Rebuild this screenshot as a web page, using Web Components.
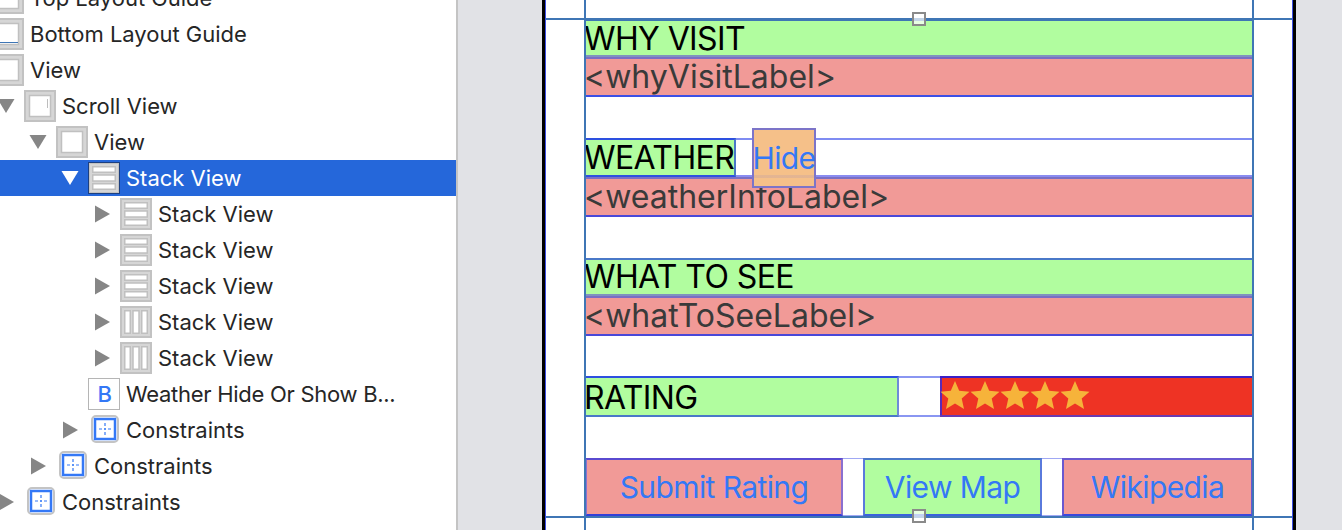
<!DOCTYPE html>
<html lang="en">
<head>
<meta charset="utf-8">
<title>Storyboard</title>
<style>
    html, body { margin: 0; height: 100%; overflow: hidden; background: #e1e2e6; }
    body { font-family: 'Inter', 'Liberation Sans', sans-serif; }
</style>
</head>
<body>

<ib-window>
    <ib-outline slot="outline">
        <ib-row level="-1" icon="guide-top">Top Layout Guide</ib-row>
        <ib-row level="-1" icon="guide-bottom">Bottom Layout Guide</ib-row>
        <ib-row level="-1" icon="view">View</ib-row>
        <ib-row level="0" icon="scroll" arrow="open">Scroll View</ib-row>
        <ib-row level="1" icon="view" arrow="open">View</ib-row>
        <ib-row level="2" icon="hstack" arrow="open" selected>Stack View</ib-row>
        <ib-row level="3" icon="hstack" arrow="closed">Stack View</ib-row>
        <ib-row level="3" icon="hstack" arrow="closed">Stack View</ib-row>
        <ib-row level="3" icon="hstack" arrow="closed">Stack View</ib-row>
        <ib-row level="3" icon="vstack" arrow="closed">Stack View</ib-row>
        <ib-row level="3" icon="vstack" arrow="closed">Stack View</ib-row>
        <ib-row level="2" icon="button" style="letter-spacing:-.28px">Weather Hide Or Show B...</ib-row>
        <ib-row level="2" icon="constraints" arrow="closed">Constraints</ib-row>
        <ib-row level="1" icon="constraints" arrow="closed">Constraints</ib-row>
        <ib-row level="0" icon="constraints" arrow="closed">Constraints</ib-row>
    </ib-outline>

    <ib-device slot="canvas">
        <ib-group>
            <ib-box kind="green" line="#7f93bf" top="#3f76b5" style="padding-top:2px">WHY VISIT</ib-box>
            <ib-box kind="pink" line="#3c4fe6" top="#7a6fc4">&lt;whyVisitLabel&gt;</ib-box>
        </ib-group>
        <ib-group>
            <weather-row>
                <ib-box kind="green" side="#4a78c8" line="#2d50e0" top="#2d50e0" style="width:151px;margin:-2px 0;padding-top:2px">WEATHER</ib-box>
                <ib-overlay-button slot="button">Hide</ib-overlay-button>
            </weather-row>
            <ib-box kind="pink" line="#4a48d8" top="#7a6fc4">&lt;weatherInfoLabel&gt;</ib-box>
        </ib-group>
        <ib-group>
            <ib-box kind="green" line="#7f93bf" top="#4a78c8">WHAT TO SEE</ib-box>
            <ib-box kind="pink" line="#4a48d8" top="#7a6fc4">&lt;whatToSeeLabel&gt;</ib-box>
        </ib-group>
        <rating-row>
            <ib-box kind="green" side="#6f8ad8" line="#4a78c8" top="#2d50e0" style="padding-top:3px">RATING</ib-box>
            <star-box slot="stars"></star-box>
        </rating-row>
        <button-row>
            <ib-box kind="pink" action side="#8a70d0" line="#3240d8" top="#5a4ad0" style="width:258px">Submit Rating</ib-box>
            <ib-box kind="green" action side="#5a7adc" line="#3a62dc" top="#4a78c8" style="width:179px">View Map</ib-box>
            <ib-box kind="pink" action side="#6a58d0" line="#3a48dc" top="#6a58d0" style="width:191px">Wikipedia</ib-box>
        </button-row>
    </ib-device>
</ib-window>

<script>
// outer split: outline on the left, storyboard canvas on the right
class IbWindow extends HTMLElement {
    constructor() {
        super();
        this.attachShadow({ mode: 'open' }).innerHTML = `
        <style>
            :host { display: flex; width: 1342px; height: 530px; overflow: hidden; }
            .outline { flex: 0 0 456px; background: #fff; border-right: 2px solid #c4c4c4; overflow: hidden; }
            .canvas { flex: 1; background: #e1e2e6; padding-left: 84px; overflow: hidden; }
        </style>
        <div class="outline"><slot name="outline"></slot></div>
        <div class="canvas"><slot name="canvas"></slot></div>
        `;
    }
}

class IbOutline extends HTMLElement {
    constructor() {
        super();
        this.attachShadow({ mode: 'open' }).innerHTML = `
        <style>
            :host { display: block; margin-top: -20px; }
        </style>
        <slot></slot>
        `;
    }
}

const TILE = '<rect x="1" y="1" width="30" height="30" fill="#d6d6d6" stroke="#c2c2c2" stroke-width="2"/>';
const PANE = '<rect x="5.500" y="5.500" width="21" height="21" fill="#fff" stroke="#c0c0c0" stroke-width="1.500"/>';
const ICONS = {
    'guide-top': `${TILE}${PANE}<path d="M6 8h20" stroke="#3f76b5"/>`,
    'guide-bottom': `${TILE}${PANE}<path d="M6 24.500h20" stroke="#3f76b5"/>`,
    'view': `${TILE}${PANE}`,
    'scroll': `${TILE}${PANE}<path d="M23.500 9v9" stroke="#bdbdbd"/>`,
    'hstack': `${TILE}<g fill="#fff" stroke="#c0c0c0" stroke-width="1.500"><rect x="4.750" y="4.750" width="22.500" height="5.500"/><rect x="4.750" y="13" width="22.500" height="6"/><rect x="4.750" y="21.750" width="22.500" height="5.500"/></g>`,
    'vstack': `${TILE}<g fill="#fff" stroke="#c0c0c0" stroke-width="1.500"><rect x="4.750" y="4.750" width="5.500" height="22.500"/><rect x="13" y="4.750" width="6" height="22.500"/><rect x="21.750" y="4.750" width="5.500" height="22.500"/></g>`,
    'button': `<rect x=".5" y=".5" width="31" height="31" fill="#fff" stroke="#b5b5b5"/><text x="16.500" y="24" text-anchor="middle" font-family="Inter" font-size="22" font-weight="500" fill="#3478f6">B</text>`,
    'constraints': `<rect x="4" y="2" width="26" height="26" rx="4" fill="#fff" stroke="#c4c4c4" stroke-width="2"/><rect x="7" y="5" width="20" height="20" fill="#fff" stroke="#3478f6" stroke-width="2.500"/><path d="M17 9v3M17 14v2M17 18v3M11 15h3M16 15h2M20 15h3" stroke="#3478f6" stroke-width="1.200"/>`
};

class IbRow extends HTMLElement {
    constructor() {
        super();
        this.attachShadow({ mode: 'open' });
    }

    connectedCallback() {
        let level = parseInt(this.getAttribute('level'));
        let arrow = this.getAttribute('arrow');
        let arrowShape = '';
        if (arrow == 'open') arrowShape = '<path d="M5.500 6h17l-8.500 14z"/>';
        if (arrow == 'closed') arrowShape = '<path d="M7 4.500l15 8.500-15 8.500z"/>';
        let icon = ICONS[this.getAttribute('icon')];

        this.shadowRoot.innerHTML = `
        <style>
            :host { display: flex; align-items: center; height: 36px; color: #262626; font-size: 22px; white-space: nowrap; }
            :host([selected]) { background: #2567da; color: #fff; }
            .inner { display: flex; align-items: center; margin-left: ${level * 32 - 8}px; }
            .arrow { width: 32px; height: 26px; flex: none; fill: #868686; }
            :host([selected]) .arrow { fill: #fff; }
            .icon { width: 32px; height: 32px; flex: none; }
            :host([selected]) .icon { outline: 1px solid #1c3f80; outline-offset: -1px; }
            .text { margin-left: 6px; }
        </style>
        <div class="inner">
            <svg class="arrow" viewBox="0 0 32 26">${arrowShape}</svg>
            <svg class="icon" viewBox="0 0 32 32">${icon}</svg>
            <span class="text"><slot></slot></span>
        </div>
        `;
    }
}

// device frame, its guides and the two resize handles
class IbDevice extends HTMLElement {
    constructor() {
        super();
        this.attachShadow({ mode: 'open' }).innerHTML = `
        <style>
            :host { display: block; position: relative; box-sizing: border-box; width: 754px; height: 530px; background: #fff;
                border-left: 3px solid #000; border-right: 3px solid #000; overflow: hidden; }
            .frame { display: flex; flex-direction: column; gap: 41.5px; box-sizing: border-box; height: 100%;
                border-left: 1px solid #3c4fe6; border-right: 1px solid #3c4fe6; padding: 19px 39px 0 39px; }
            .guide { position: absolute; background: #3f76b5; }
            .v { top: 0; bottom: 0; width: 2px; }
            .h { left: 1px; right: 1px; height: 2px; }
            .handle { position: absolute; box-sizing: border-box; width: 14px; height: 14px; left: 367px;
                border: 2px solid #8a8a8a; background: rgba(255,255,255,.7); }
        </style>
        <div class="frame"><slot></slot></div>
        <div class="guide v" style="left:39px"></div>
        <div class="guide v" style="left:707px"></div>
        <div class="guide h" style="top:18px"></div>
        <div class="guide h" style="top:516px"></div>
        <div class="handle" style="top:12px"></div>
        <div class="handle" style="top:509px"></div>
        `;
    }
}

class IbGroup extends HTMLElement {
    constructor() {
        super();
        this.attachShadow({ mode: 'open' }).innerHTML = `
        <style>
            :host { display: grid; grid-template-rows: 38px 40px; height: 78px; }
        </style>
        <slot></slot>
        `;
    }
}

// coloured debug box, as interface builder tints stack view children
class IbBox extends HTMLElement {
    constructor() {
        super();
        this.attachShadow({ mode: 'open' }).innerHTML = `
        <style>
            :host { display: flex; align-items: center; box-sizing: border-box; min-width: 0;
                font-size: 32px; line-height: 34px; white-space: nowrap; color: #000; letter-spacing: -.6px; }
            :host([kind="green"]) { background: #b1fd9f; }
            :host([kind="pink"]) { background: #f19a97; color: #3a3a3a; letter-spacing: 0; }
            :host([action]) { justify-content: center; color: #3478f6; height: 58px; font-size: 30px; letter-spacing: -.6px; }
            :host { border-top: 2px solid var(--top, transparent); border-bottom: 2px solid var(--line, transparent); }
            :host([side]) { border-right: 2px solid var(--side, transparent); }
            :host([action]) { border-left: 2px solid var(--side, transparent); }
            :host(:not([action])) span { margin-left: -1px; }
        </style>
        <span><slot></slot></span>
        `;
    }

    connectedCallback() {
        this.style.setProperty('--top', this.getAttribute('top'));
        this.style.setProperty('--line', this.getAttribute('line'));
        this.style.setProperty('--side', this.getAttribute('side'));
    }
}

class WeatherRow extends HTMLElement {
    constructor() {
        super();
        this.attachShadow({ mode: 'open' }).innerHTML = `
        <style>
            :host { display: flex; position: relative; box-sizing: border-box; height: 39px; margin-top: -1px;
                border-top: 2px solid #7f8cf2; border-bottom: 2px solid #8a8cf0; }
            .btn { position: absolute; left: 167px; top: -12px; z-index: 1; }
        </style>
        <slot></slot>
        <div class="btn"><slot name="button"></slot></div>
        `;
    }
}

class IbOverlayButton extends HTMLElement {
    constructor() {
        super();
        this.attachShadow({ mode: 'open' }).innerHTML = `
        <style>
            :host { display: flex; align-items: center; justify-content: center; box-sizing: border-box; width: 64px; height: 60px;
                background: linear-gradient(transparent 45px, rgba(124,116,200,.15) 45px 48px, transparent 48px), #f5c089;
                border: 2px solid #7c74c8; color: #3478f6; font-size: 30px; letter-spacing: -.6px; }
        </style>
        <slot></slot>
        `;
    }
}

class RatingRow extends HTMLElement {
    constructor() {
        super();
        this.attachShadow({ mode: 'open' }).innerHTML = `
        <style>
            :host { display: grid; grid-template-columns: 314px 41px 313px; grid-template-rows: 40.5px; height: 40.5px; margin-top: -1.5px; }
            .gap { box-sizing: border-box; border-top: 2px solid #8a96f2; border-bottom: 2px solid #8a96f2; }
        </style>
        <slot></slot>
        <div class="gap"></div>
        <slot name="stars"></slot>
        `;
    }
}

class StarBox extends HTMLElement {
    constructor() {
        super();
        let star = '<svg viewBox="0 0 30 30"><path d="M15 1l4.200 9.700 10.300 1-7.800 6.900 2.300 10.300-9-5.400-9 5.400 2.300-10.300L.500 11.700l10.300-1z"/></svg>';
        this.attachShadow({ mode: 'open' }).innerHTML = `
        <style>
            :host { display: flex; align-items: center; box-sizing: border-box; background: #ee3324; padding-bottom: 2px;
                border-top: 2px solid #3a20c8; border-bottom: 2px solid #6a3ab0; box-shadow: inset 2px 0 #5a2ab8; }
            svg { width: 30px; height: 30px; fill: #f6b33a; flex: none; }
            svg:first-child { margin-left: -2px; }
        </style>
        ${star.repeat(5)}
        `;
    }
}

class ButtonRow extends HTMLElement {
    constructor() {
        super();
        this.attachShadow({ mode: 'open' }).innerHTML = `
        <style>
            :host { display: flex; justify-content: space-between; box-sizing: border-box; height: 58px;
                border-top: 1px solid #a0a8f4; border-bottom: 1px solid #a0a8f4; }
            ::slotted(ib-box) { margin-top: -1px; }
        </style>
        <slot></slot>
        `;
    }
}

customElements.define('ib-window', IbWindow);
customElements.define('ib-outline', IbOutline);
customElements.define('ib-row', IbRow);
customElements.define('ib-device', IbDevice);
customElements.define('ib-group', IbGroup);
customElements.define('ib-box', IbBox);
customElements.define('weather-row', WeatherRow);
customElements.define('ib-overlay-button', IbOverlayButton);
customElements.define('rating-row', RatingRow);
customElements.define('star-box', StarBox);
customElements.define('button-row', ButtonRow);
</script>
</body>
</html>
